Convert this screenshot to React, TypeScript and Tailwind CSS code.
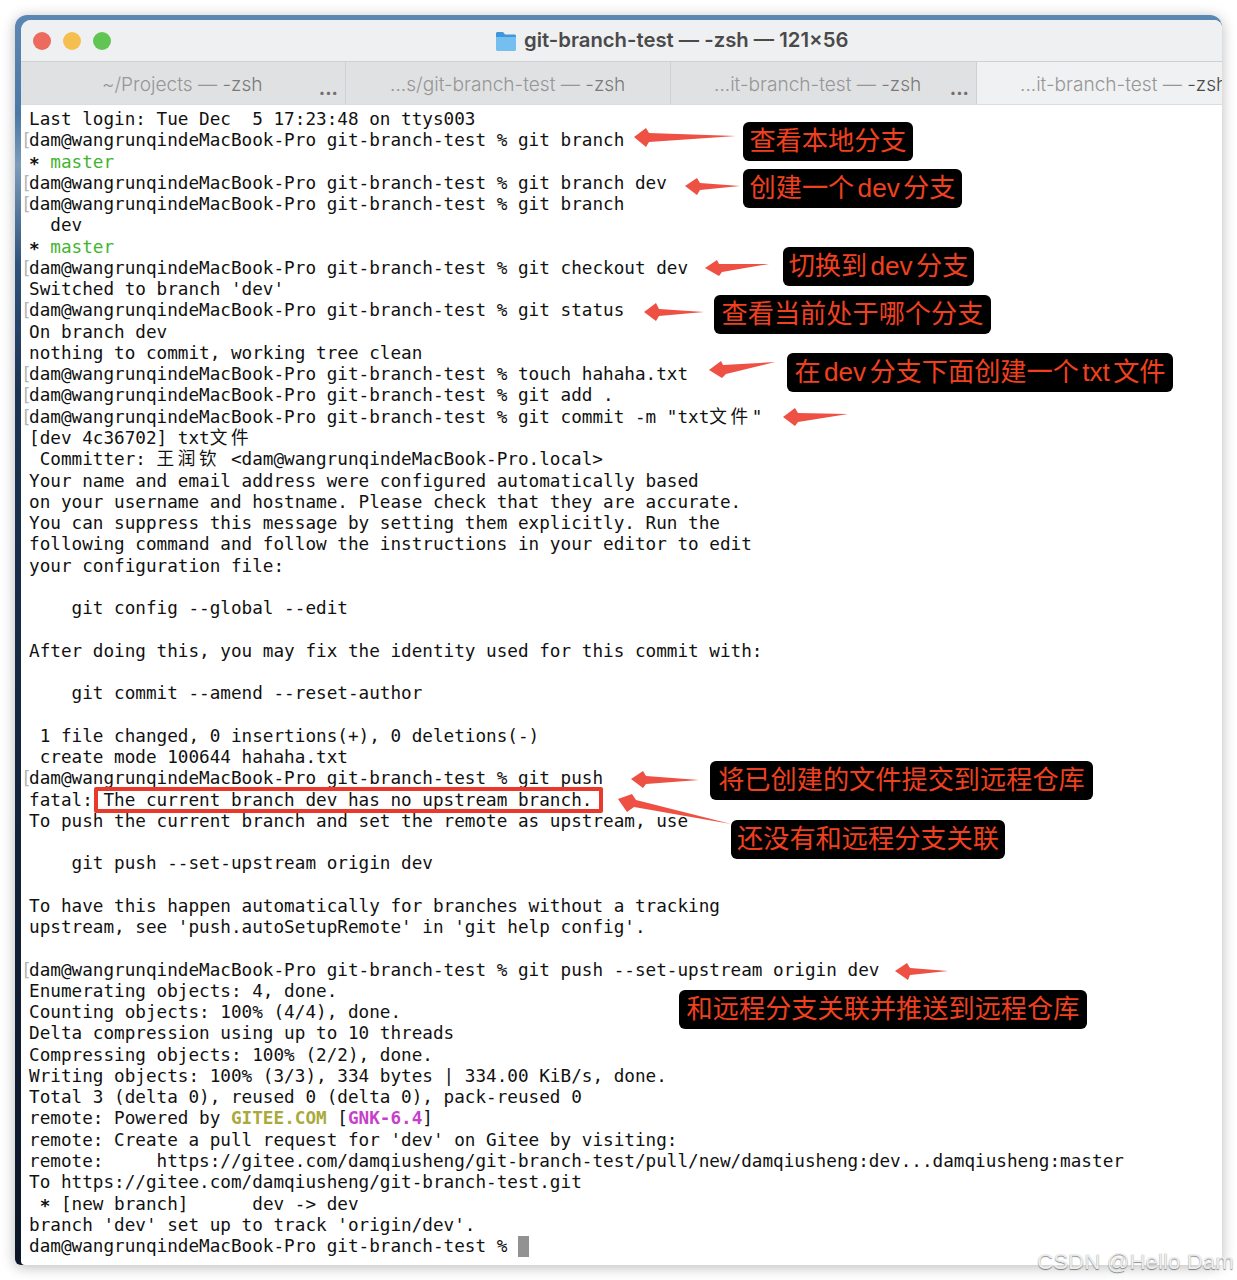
import React from "react";

const C = ({ c }: { c: string }) => (
  <span className="inline-block w-[21.25px] font-['DejaVu_Sans_Mono','Noto_Sans_CJK_SC',monospace]">{c}</span>
);

const P = "dam@wangrunqindeMacBook-Pro git-branch-test % ";

const Star = () => <span className="inline-block translate-y-[2px] font-bold">*</span>;

const Prompt = ({ children }: { children: React.ReactNode }) => (
  <>
    <span className="inline-block w-[8px] -ml-[8px] tracking-[-3px] text-[#b5b5b5]">[</span>
    {P}
    {children}
  </>
);

const lines: React.ReactNode[] = [
  "Last login: Tue Dec  5 17:23:48 on ttys003",
  <Prompt>git branch</Prompt>,
  <><Star /> <span className="text-[#3fb52f]">master</span></>,
  <Prompt>git branch dev</Prompt>,
  <Prompt>git branch</Prompt>,
  "  dev",
  <><Star /> <span className="text-[#3fb52f]">master</span></>,
  <Prompt>git checkout dev</Prompt>,
  "Switched to branch 'dev'",
  <Prompt>git status</Prompt>,
  "On branch dev",
  "nothing to commit, working tree clean",
  <Prompt>touch hahaha.txt</Prompt>,
  <Prompt>git add .</Prompt>,
  <Prompt>git commit -m "txt<C c="文" /><C c="件" />"</Prompt>,
  <>[dev 4c36702] txt<C c="文" /><C c="件" /></>,
  <> Committer: <C c="王" /><C c="润" /><C c="钦" /> {"<dam@wangrunqindeMacBook-Pro.local>"}</>,
  "Your name and email address were configured automatically based",
  "on your username and hostname. Please check that they are accurate.",
  "You can suppress this message by setting them explicitly. Run the",
  "following command and follow the instructions in your editor to edit",
  "your configuration file:",
  "",
  "    git config --global --edit",
  "",
  "After doing this, you may fix the identity used for this commit with:",
  "",
  "    git commit --amend --reset-author",
  "",
  " 1 file changed, 0 insertions(+), 0 deletions(-)",
  " create mode 100644 hahaha.txt",
  <Prompt>git push</Prompt>,
  "fatal: The current branch dev has no upstream branch.",
  "To push the current branch and set the remote as upstream, use",
  "",
  "    git push --set-upstream origin dev",
  "",
  "To have this happen automatically for branches without a tracking",
  "upstream, see 'push.autoSetupRemote' in 'git help config'.",
  "",
  <Prompt>git push --set-upstream origin dev</Prompt>,
  "Enumerating objects: 4, done.",
  "Counting objects: 100% (4/4), done.",
  "Delta compression using up to 10 threads",
  "Compressing objects: 100% (2/2), done.",
  "Writing objects: 100% (3/3), 334 bytes | 334.00 KiB/s, done.",
  "Total 3 (delta 0), reused 0 (delta 0), pack-reused 0",
  <>remote: Powered by <span className="font-bold text-[#a9a93c]">GITEE.COM</span> [<span className="font-bold text-[#c740c9]">GNK-6.4</span>]</>,
  "remote: Create a pull request for 'dev' on Gitee by visiting:",
  "remote:     https://gitee.com/damqiusheng/git-branch-test/pull/new/damqiusheng:dev...damqiusheng:master",
  "To https://gitee.com/damqiusheng/git-branch-test.git",
  <> <Star /> [new branch]      dev -&gt; dev</>,
  "branch 'dev' set up to track 'origin/dev'.",
  <>{P}<span className="inline-block w-[10.625px] h-[21px] bg-[#929292] align-top"></span></>,
];

const notes = [
  { t: "查看本地分支", c: "left-[743px] top-[122px] w-[170px]" },
  { t: "创建一个 dev 分支", c: "left-[743px] top-[169px] w-[219px]" },
  { t: "切换到 dev 分支", c: "left-[783px] top-[247px] w-[191px]" },
  { t: "查看当前处于哪个分支", c: "left-[714px] top-[295px] w-[277px]" },
  { t: "在 dev 分支下面创建一个 txt 文件", c: "left-[787px] top-[353px] w-[386px]" },
  { t: "将已创建的文件提交到远程仓库", c: "left-[710px] top-[761px] w-[383px]" },
  { t: "还没有和远程分支关联", c: "left-[731px] top-[820px] w-[274px]" },
  { t: "和远程分支关联并推送到远程仓库", c: "left-[679px] top-[990px] w-[408px]" },
];

const arrows = [
  "634,137 646,128 649,133 736,136 649,142 646,147",
  "685,186 697,178 700,183 740,186 700,190 697,195",
  "705,268 717,260 719,264 769,264 722,272 719,276",
  "644,312 656,303 659,309 704,312 659,316 656,321",
  "709,370 721,361 723,365 775,362 726,374 722,378",
  "783,417 795,408 798,413 848,414 798,422 795,426",
  "631,779 643,771 646,776 699,780 646,784 643,788",
  "618,799 632,794 636,800 731,824 634,807 627,812",
  "895,971 907,963 910,968 948,971 910,975 908,980",
];

const Tab = ({ w, pl, dir, dots, active }: { w: string; pl: string; dir: string; dots?: string; active?: boolean }) => (
  <div className={`relative flex h-full items-center overflow-hidden whitespace-nowrap pt-[3px] ${w} ${pl} ${active ? "bg-[#f0f1f3]" : "bg-[#e0e1e3] border-r border-[#cfd0d2]"}`}>
    <span className="text-[#969696]">{dir} — </span>
    <span className={active ? "text-[#4a4a4a]" : "text-[#7a7a7a]"}>&nbsp;-zsh</span>
    {dots && <span className={`absolute top-[12px] text-[#6f6f6f] font-bold ${dots}`}>...</span>}
  </div>
);

export default function App() {
  return (
    <div className="relative w-[1237px] h-[1280px] overflow-hidden bg-white pt-[15px] pl-[15px]">
      <div className="w-[1207px] h-[1250px] rounded-t-[12px] rounded-b-[6px] pt-[5px] pl-[6px] shadow-[0_2px_14px_rgba(0,0,0,0.28)] bg-[linear-gradient(180deg,#5b87b3_0%,#4a78a6_8%,#7d9cba_12%,#2f527c_20%,#1c3454_30%,#14243e_60%,#0c1628_100%)]">
        <div className="flex flex-col h-full bg-white rounded-tl-[10px] rounded-tr-[8px] rounded-bl-[4px] overflow-hidden">
          <div className="flex items-center h-[42px] shrink-0 bg-[#eff0f2] border-b border-[#cfd0d2] pl-[12px]">
            <div className="flex gap-[12px] w-[462px] shrink-0">
              <span className="w-[18px] h-[18px] rounded-full bg-[#ec6a5e]"></span>
              <span className="w-[18px] h-[18px] rounded-full bg-[#f4bf4f]"></span>
              <span className="w-[18px] h-[18px] rounded-full bg-[#61c554]"></span>
            </div>
            <div className="flex items-center gap-[7px]">
              <svg width="22" height="22" viewBox="0 0 22 22">
                <path d="M1 3.5C1 2.7 1.7 2 2.5 2H8l2 2.5h9.5c.8 0 1.500.7 1.500 1.500v3H1z" fill="#3f96d8" />
                <path d="M1 7h20v12.500c0 .8-.7 1.500-1.500 1.500h-17C1.700 21 1 20.300 1 19.500z" fill="#74bff0" />
              </svg>
              <span className="font-['Inter','Liberation_Sans',sans-serif] font-semibold text-[20.3px] text-[#4a4a4a] whitespace-nowrap">git-branch-test — -zsh — 121×56</span>
            </div>
          </div>
          <div className="flex h-[43px] shrink-0 border-b border-[#dcdcde] font-['Inter','Liberation_Sans',sans-serif] text-[19.1px] font-light">
            <Tab w="w-[325px]" pl="pl-[81px]" dir="~/Projects" dots="right-[7px]" />
            <Tab w="w-[325px]" pl="pl-[44px]" dir="...s/git-branch-test" />
            <Tab w="w-[306px]" pl="pl-[43px]" dir="...it-branch-test" dots="right-[7px]" />
            <Tab w="w-[245px]" pl="pl-[43px]" dir="...it-branch-test" active />
          </div>
          <div className="flex-1 pt-[4px] pl-[8px] font-['DejaVu_Sans_Mono','Noto_Sans_CJK_SC',monospace] text-[17.66px] leading-[21.28px] text-[#111111]">
            {lines.map((l, i) => (
              <div key={i} className="h-[21.28px] whitespace-pre">{l}</div>
            ))}
          </div>
        </div>
      </div>

      <div className="absolute left-[94px] top-[787px] w-[509px] h-[26px] border-[4px] border-[#e8392a] rounded-[2px]"></div>

      <svg className="absolute left-0 top-0" width="1237" height="1280" viewBox="0 0 1237 1280">
        {arrows.map((p, i) => (
          <polygon key={i} points={p} fill="#ee5044" />
        ))}
      </svg>

      {notes.map((n, i) => (
        <div
          key={i}
          className={`absolute h-[39px] pt-[1px] flex items-center justify-center whitespace-nowrap rounded-[6px] bg-black text-[#f0401f] text-[26.2px] [word-spacing:-4px] font-['Liberation_Sans','Noto_Sans_CJK_SC',sans-serif] ${n.c}`}
        >
          {n.t}
        </div>
      ))}

      <div className="absolute left-[1037px] top-[1245px] font-['Liberation_Sans',sans-serif] text-[22.4px] text-[#ececec] whitespace-nowrap [text-shadow:0_1px_1px_rgba(0,0,0,0.45)]">
        CSDN @Hello Dam
      </div>
    </div>
  );
}
